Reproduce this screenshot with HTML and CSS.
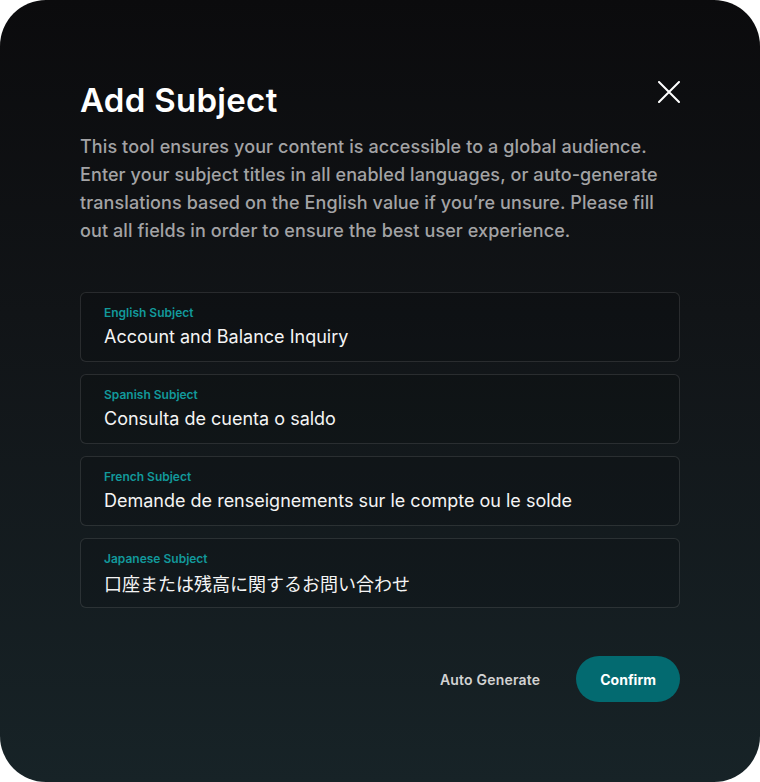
FILE: index.html
```html
<!DOCTYPE html>
<html>
<head>
    <title>Add Subject</title>
    <link rel="stylesheet" href="styles.css">
</head>
<body>
    <div class="modal">
        <button class="close" aria-label="Close">
            <svg width="22" height="22" viewBox="0 0 22 22" fill="none" stroke="#fff" stroke-width="2" stroke-linecap="round">
                <path d="M1 1L21 21M21 1L1 21"/>
            </svg>
        </button>
        <h1>Add Subject</h1>
        <p class="intro">This tool ensures your content is accessible to a global audience. Enter your subject titles in all enabled languages, or auto-generate translations based on the English value if you’re unsure. Please fill out all fields in order to ensure the best user experience.</p>

        <div class="fields">
            <div class="field">
                <label>English Subject</label>
                <div class="value">Account and Balance Inquiry</div>
            </div>
            <div class="field">
                <label>Spanish Subject</label>
                <div class="value">Consulta de cuenta o saldo</div>
            </div>
            <div class="field">
                <label>French Subject</label>
                <div class="value">Demande de renseignements sur le compte ou le solde</div>
            </div>
            <div class="field">
                <label>Japanese Subject</label>
                <div class="value jp">口座または残高に関するお問い合わせ</div>
            </div>
        </div>

        <div class="actions">
            <button class="link-btn">Auto Generate</button>
            <button class="primary-btn">Confirm</button>
        </div>
    </div>
</body>
</html>
```

FILE: styles.css
```css
body {
    margin: 0;
    background: #fff;
    font-family: Inter, "Noto Sans CJK JP", sans-serif;
}
.modal {
    position: relative;
    box-sizing: border-box;
    width: 760px;
    height: 782px;
    padding: 80px 80px 0;
    border-radius: 46px;
    background: linear-gradient(180deg, #0b0b0d 0%, #111417 40%, #172327 100%);
    color: #fff;
}
.close {
    position: absolute;
    top: 81px;
    right: 80px;
    width: 22px;
    height: 22px;
    padding: 0;
    border: none;
    background: none;
    cursor: pointer;
}
.close svg {
    display: block;
}
h1 {
    margin: 0;
    font-size: 33px;
    line-height: 40px;
    font-weight: 600;
    letter-spacing: 0.3px;
}
.intro {
    max-width: 590px;
    margin: 13px 0 0;
    font-size: 18px;
    line-height: 28px;
    font-weight: 500;
    letter-spacing: 0.1px;
    color: #a3a3a5;
}
.fields {
    display: flex;
    flex-direction: column;
    gap: 12px;
    margin-top: 47px;
}
.field {
    height: 70px;
    box-sizing: border-box;
    padding: 12px 23px 10px;
    border: 1px solid rgba(255, 255, 255, 0.11);
    border-radius: 6px;
    background: rgba(0, 0, 0, 0.12);
}
.field label {
    display: block;
    font-size: 12px;
    line-height: 16px;
    font-weight: 600;
    color: #12999b;
}
.value {
    margin-top: 2px;
    font-size: 18px;
    line-height: 28px;
    color: #f4f4f4;
}
.value.jp {
    font-family: "Noto Sans CJK JP", sans-serif;
    font-weight: 400;
}
.actions {
    display: flex;
    justify-content: flex-end;
    align-items: center;
    gap: 36px;
    margin-top: 48px;
}
.link-btn {
    padding: 0;
    border: none;
    background: none;
    font-family: inherit;
    font-size: 14px;
    font-weight: 600;
    letter-spacing: 0.2px;
    color: #d2d2d2;
    cursor: pointer;
}
.primary-btn {
    height: 46px;
    padding: 0 24px;
    border: none;
    border-radius: 23px;
    background: #036a70;
    color: #fff;
    font-family: inherit;
    font-size: 14px;
    font-weight: 700;
    cursor: pointer;
}
```
